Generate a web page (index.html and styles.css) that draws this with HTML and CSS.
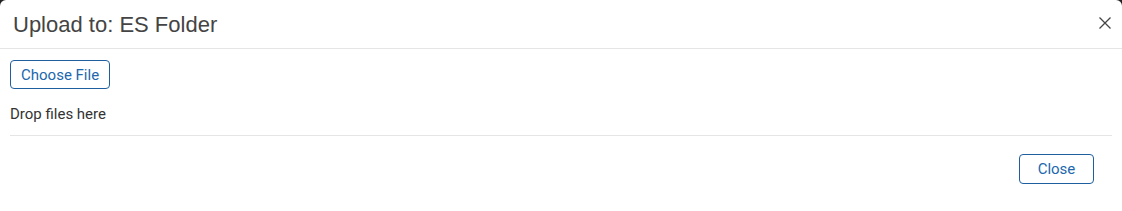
FILE: index.html
```html
<!DOCTYPE html>
<html lang="en">
<head>
  <meta charset="UTF-8" />
  <title>Upload</title>
  <link rel="stylesheet" href="styles.css">
</head>
<body>
<div class="modal">
  <div class="modal-header">
    <h4 class="modal-title">Upload to: ES Folder</h4>
    <button type="button" class="close-x" aria-label="Close">
      <svg width="12" height="12" viewBox="0 0 12 12"><path d="M0.5 0.5 L11.5 11.5 M11.5 0.5 L0.5 11.5" stroke="#444" stroke-width="1.3" fill="none"/></svg>
    </button>
  </div>
  <div class="modal-body">
    <button type="button" class="btn">Choose File</button>
    <p class="drop">Drop files here</p>
  </div>
  <div class="modal-footer">
    <button type="button" class="btn btn-close">Close</button>
  </div>
</div>
</body>
</html>
```

FILE: styles.css
```css
body { margin: 0; background: #222; font-family: Roboto, "Liberation Sans", sans-serif; }
.modal { background: white; min-height: 100vh; border-radius: 6px 6px 0 0; box-sizing: border-box; }
.modal-header { display: flex; align-items: center; justify-content: space-between; height: 49px; padding: 0 11px 0 13px; border-bottom: 1px solid #e5e5e5; box-sizing: border-box; }
.modal-title { margin: 0; font-family: "Liberation Sans", Arial, sans-serif; font-weight: normal; font-size: 22px; color: #444; padding-top: 2px; }
.close-x { background: none; border: none; padding: 0; width: 12px; height: 12px; display: flex; cursor: pointer; margin-top: -2px; }
.modal-body { padding: 11px 10px 0 10px; }
.btn { font-family: Roboto, "Liberation Sans", sans-serif; font-size: 15px; color: #2167ae; background: white; border: 1px solid #1f5f9f; border-radius: 4px; height: 29px; padding: 0 10px; cursor: pointer; }
.drop { margin: 0; padding: 16px 0 12px; font-size: 15px; color: #333; border-bottom: 1px solid #e5e5e5; }
.modal-footer { display: flex; justify-content: flex-end; padding: 18px 28px 0 0; }
.btn-close { width: 75px; height: 30px; }
```
